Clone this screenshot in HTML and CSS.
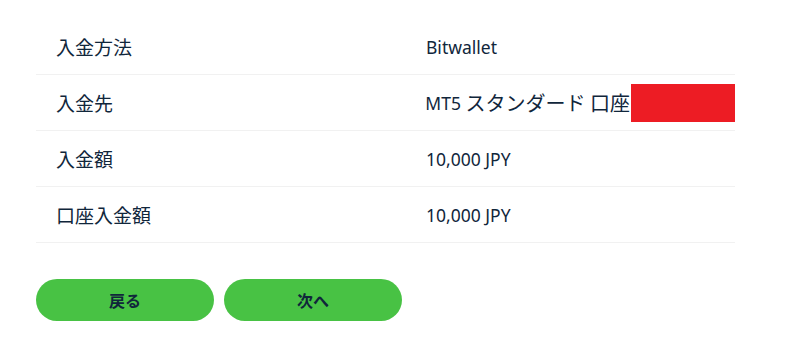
FILE: index.html
```html
<!DOCTYPE html>
<html lang="ja">
<head>
  <meta charset="UTF-8">
  <title>入金確認</title>
  <link rel="stylesheet" href="styles.css">
</head>
<body>
  <div class="confirm">
    <div class="confirm-table">
      <div class="row">
        <span class="label">入金方法</span>
        <span class="value">Bitwallet</span>
      </div>
      <div class="row">
        <span class="label">入金先</span>
        <span class="value">MT5 <span class="ja">スタンダード 口座</span><span class="masked"></span></span>
      </div>
      <div class="row">
        <span class="label">入金額</span>
        <span class="value">10,000 JPY</span>
      </div>
      <div class="row">
        <span class="label">口座入金額</span>
        <span class="value">10,000 JPY</span>
      </div>
    </div>

    <div class="actions">
      <button class="btn">戻る</button>
      <button class="btn">次へ</button>
    </div>
  </div>
</body>
</html>
```

FILE: styles.css
```css
body {
  margin: 0;
  padding: 0;
  background-color: white;
  color: #10263b;
  font-family: 'Noto Sans', 'Noto Sans CJK JP', sans-serif;
}
.confirm {
  width: 699px;
  padding: 19px 0 0 36px;
}
.confirm-table {
  width: 100%;
}
.row {
  display: flex;
  align-items: center;
  height: 55px;
  border-bottom: 1px solid #f1f1f1;
}
.label {
  width: 370px;
  padding-left: 20px;
  font-family: 'Noto Sans CJK JP', sans-serif;
  font-size: 19px;
}
.value {
  display: flex;
  align-items: center;
  white-space: pre;
  font-size: 17.5px;
  font-family: 'Noto Sans', 'Noto Sans CJK JP', sans-serif;
}
.value .ja {
  font-family: 'Noto Sans CJK JP', sans-serif;
  font-size: 20px;
}
.masked {
  display: inline-block;
  width: 104px;
  height: 38px;
  margin-left: 1px;
  background-color: #ed1c24;
}
.actions {
  display: flex;
  gap: 10px;
  margin-top: 36px;
}
.btn {
  width: 178px;
  height: 42px;
  border: none;
  border-radius: 21px;
  background-color: #48c244;
  color: #10263b;
  font-family: 'Noto Sans CJK JP', sans-serif;
  font-weight: bold;
  font-size: 16px;
  cursor: pointer;
}
```
